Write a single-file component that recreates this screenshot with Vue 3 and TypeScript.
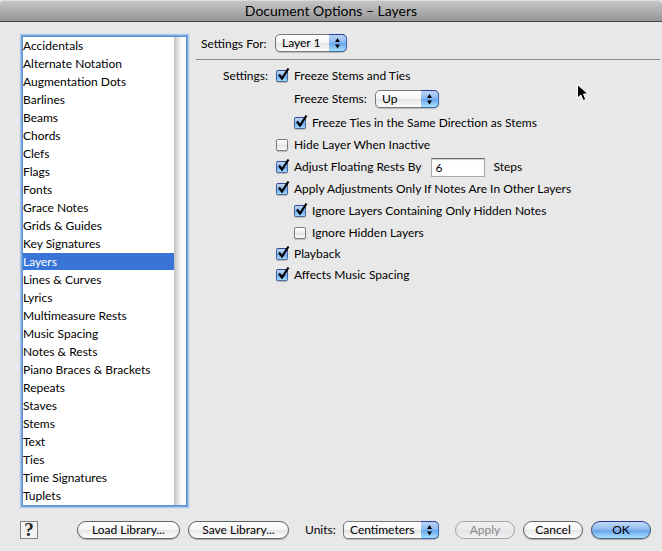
<script setup lang="ts">
import { reactive, ref } from 'vue'

interface Check {
  id: string
  label: string
  checked: boolean
  nested?: boolean
  kind?: 'stems' | 'steps'
}

const categories: string[] = [
  'Accidentals', 'Alternate Notation', 'Augmentation Dots', 'Barlines', 'Beams', 'Chords',
  'Clefs', 'Flags', 'Fonts', 'Grace Notes', 'Grids & Guides', 'Key Signatures', 'Layers',
  'Lines & Curves', 'Lyrics', 'Multimeasure Rests', 'Music Spacing', 'Notes & Rests',
  'Piano Braces & Brackets', 'Repeats', 'Staves', 'Stems', 'Text', 'Ties',
  'Time Signatures', 'Tuplets',
]
const current = ref('Layers')

const layer = ref('Layer 1')
const stems = ref('Up')
const steps = ref('6')
const units = ref('Centimeters')

const checks = reactive<Check[]>([
  { id: 'freeze', label: 'Freeze Stems and Ties', checked: true, kind: 'stems' },
  { id: 'ties', label: 'Freeze Ties in the Same Direction as Stems', checked: true, nested: true },
  { id: 'hide', label: 'Hide Layer When Inactive', checked: false },
  { id: 'rests', label: 'Adjust Floating Rests By', checked: true, kind: 'steps' },
  { id: 'apply', label: 'Apply Adjustments Only If Notes Are In Other Layers', checked: true },
  { id: 'ignore-notes', label: 'Ignore Layers Containing Only Hidden Notes', checked: true, nested: true },
  { id: 'ignore-layers', label: 'Ignore Hidden Layers', checked: false, nested: true },
  { id: 'playback', label: 'Playback', checked: true },
  { id: 'spacing', label: 'Affects Music Spacing', checked: true },
])
</script>

<template>
  <div class="window">
    <header class="titlebar"><h1>Document Options – Layers</h1></header>

    <div class="body">
      <nav class="categories" aria-label="Categories">
        <ul>
          <li v-for="name in categories" :key="name">
            <button
              type="button"
              :class="{ selected: name === current }"
              :aria-current="name === current"
              @click="current = name"
            >{{ name }}</button>
          </li>
        </ul>
        <div class="track"></div>
      </nav>

      <main>
        <div class="target">
          <label for="layer">Settings For:</label>
          <span class="popup layer">
            <select id="layer" v-model="layer">
              <option>Layer 1</option>
              <option>Layer 2</option>
              <option>Layer 3</option>
              <option>Layer 4</option>
            </select>
            <svg viewBox="0 0 17 16" aria-hidden="true"><path d="M6 7 8.5 3 11 7zM6 9.5 8.5 13.5 11 9.5z" /></svg>
          </span>
        </div>

        <div class="settings">
          <span class="heading">Settings:</span>
          <div class="rows">
            <template v-for="item in checks" :key="item.id">
              <div class="row" :class="[item.id, { nested: item.nested }]">
                <label class="check">
                  <span class="box">
                    <input v-model="item.checked" type="checkbox" />
                    <svg v-if="item.checked" viewBox="0 0 14 15" aria-hidden="true">
                      <path d="M3 7.5 6 11.5 12.5 1.5" />
                    </svg>
                  </span>
                  {{ item.label }}
                </label>
                <template v-if="item.kind === 'steps'">
                  <input id="steps" v-model="steps" class="field" type="text" />
                  <label for="steps" class="unit">Steps</label>
                </template>
              </div>
              <div v-if="item.kind === 'stems'" class="row sub">
                <label for="stems">Freeze Stems:</label>
                <span class="popup stems">
                  <select id="stems" v-model="stems">
                    <option>Up</option>
                    <option>Down</option>
                  </select>
                  <svg viewBox="0 0 17 16" aria-hidden="true"><path d="M6 7 8.5 3 11 7zM6 9.5 8.5 13.5 11 9.5z" /></svg>
                </span>
              </div>
            </template>
          </div>
        </div>
      </main>
    </div>

    <footer>
      <button type="button" class="help" aria-label="Help">?</button>
      <div class="library">
        <button type="button" class="pill load">Load Library...</button>
        <button type="button" class="pill save">Save Library...</button>
      </div>
      <div class="units">
        <label for="units">Units:</label>
        <span class="popup measure">
          <select id="units" v-model="units">
            <option>Centimeters</option>
            <option>Inches</option>
            <option>Points</option>
          </select>
          <svg viewBox="0 0 17 16" aria-hidden="true"><path d="M6 7 8.5 3 11 7zM6 9.5 8.5 13.5 11 9.5z" /></svg>
        </span>
      </div>
      <div class="actions">
        <button type="button" class="pill" disabled>Apply</button>
        <button type="button" class="pill">Cancel</button>
        <button type="button" class="pill primary">OK</button>
      </div>
    </footer>

    <svg class="pointer" viewBox="0 0 14 20" aria-hidden="true">
      <path d="M1.5 1.5V15L4.8 12 7.2 17.5 9.8 16.4 7.5 11H12z" />
    </svg>
  </div>
</template>

<style>
body {
  background: #e8e8e8;
}
</style>

<style scoped>
.window {
  position: relative;
  min-height: 100vh;
  box-sizing: border-box;
  display: flex;
  flex-direction: column;
  background: #e8e8e8;
  color: #000;
  font-family: Lato, "Open Sans", sans-serif;
  font-size: 12px;
  line-height: 16px;
}

button,
input,
select {
  margin: 0;
  font: inherit;
  color: inherit;
  box-sizing: border-box;
}

.titlebar {
  height: 22px;
  box-sizing: border-box;
  border-top: 1px solid #d8dcda;
  border-bottom: 1px solid #484848;
  border-radius: 4px 4px 0 0;
  background: linear-gradient(#c6c6c6, #969696);
}

h1 {
  margin: 0;
  font-size: 14px;
  font-weight: 400;
  line-height: 20px;
  text-align: center;
}

.body {
  display: flex;
  gap: 10px;
  padding: 15px 2px 0 23px;
}

.categories {
  flex: none;
  display: flex;
  width: 163px;
  background: #fff;
  box-shadow: 0 0 0 1px #5b8fd0, 0 0 0 2px #79a7e0, 0 0 1px 3px #a9c5e8;
}

ul {
  flex: 1;
  margin: 0;
  padding: 0;
  list-style: none;
}

li {
  height: 18px;
}

li button {
  display: block;
  width: 100%;
  height: 17px;
  padding: 0;
  border: 0;
  background: none;
  line-height: 18px;
  text-align: left;
}

li .selected {
  background: #3875d7;
  color: #fff;
}

.track {
  width: 12px;
  background: linear-gradient(90deg, #bdbdbd, #e2e2e2 30%, #fbfbfb 65%, #fff);
}

main {
  flex: 1;
  min-width: 0;
}

.target {
  display: flex;
  align-items: flex-start;
  gap: 7px;
  height: 22px;
  padding-left: 5px;
  border-bottom: 1px solid #8c8c8c;
}

.target label {
  width: 67px;
  line-height: 13px;
}

.target .popup {
  margin-top: -3px;
}

.popup {
  position: relative;
  display: inline-flex;
  height: 18px;
}

.popup select {
  width: 100%;
  height: 18px;
  padding: 0 22px 0 6px;
  appearance: none;
  border: 1px solid #777;
  border-radius: 5px;
  background: linear-gradient(#fff, #f4f4f4 48%, #e4e4e4 52%, #fdfdfd);
  box-shadow: 0 1px 1px #0003;
  line-height: 16px;
}

.popup svg {
  position: absolute;
  top: 0;
  right: 0;
  width: 18px;
  height: 18px;
  box-sizing: border-box;
  border: 1px solid #3c66ad;
  border-top-color: #2b3f9c;
  border-left: 0;
  border-radius: 0 5px 5px 0;
  background: linear-gradient(#b9d3f5, #8fbaf0 45%, #69a6ec 52%, #a6e0ff);
  pointer-events: none;
}

.layer {
  width: 72px;
}

.stems {
  width: 64px;
}

.measure {
  width: 96px;
}

.settings {
  display: flex;
  gap: 8px;
  padding-top: 5px;
}

.heading {
  width: 72px;
  text-align: right;
  line-height: 22px;
}

.row {
  display: flex;
  align-items: center;
  height: 22px;
}

.nested {
  padding-left: 18px;
}

.sub {
  height: 24px;
  gap: 6px;
  margin-bottom: 1px;
  padding-left: 18px;
}

.sub label {
  width: 75px;
}

.playback {
  height: 20px;
}

.check {
  display: flex;
  align-items: center;
  gap: 5px;
}

.box {
  position: relative;
  width: 13px;
  height: 13px;
}

.box input {
  display: block;
  width: 12px;
  height: 12px;
  appearance: none;
  border: 1px solid #7d7d7d;
  border-radius: 2px;
  background: linear-gradient(#fff, #ececec 50%, #e2e2e2 55%, #fafafa);
  box-shadow: 0 1px 1px #0003;
}

.box input:checked {
  border-color: #2e458f #42649f #4a6b96;
  background: linear-gradient(#c2daf7, #85b4ee 50%, #6aa8ee 55%, #a6deff);
}

.box svg {
  position: absolute;
  top: -3px;
  left: 0;
  width: 14px;
  height: 15px;
  fill: none;
  stroke: #000;
  stroke-width: 2.2;
  pointer-events: none;
}

.field {
  width: 54px;
  height: 19px;
  margin-left: 10px;
  padding: 0 3px;
  border: 1px solid #a8a8a8;
  border-top-color: #6c6c6c;
  background: #fff;
  box-shadow: inset 0 1px 1px #0003;
}

.unit {
  margin-left: 8px;
}

footer {
  display: flex;
  align-items: center;
  padding: 16px 11px 10px 20px;
}

.help {
  width: 18px;
  height: 18px;
  padding: 0;
  border: 1px solid #868686;
  background: #f3f3f3;
  color: #222;
  font-family: "Liberation Serif", serif;
  font-size: 19px;
  font-weight: 700;
  line-height: 16px;
}

.library {
  display: flex;
  gap: 8px;
  margin-left: 39px;
}

.units {
  display: flex;
  align-items: center;
  gap: 7px;
  margin-left: 16px;
}

.units label {
  width: 31px;
}

.actions {
  display: flex;
  gap: 8px;
  margin-left: auto;
}

.pill {
  width: 60px;
  height: 18px;
  padding: 0;
  border: 1px solid #626262;
  border-radius: 9px;
  background: linear-gradient(#fff, #f6f6f6 48%, #e6e6e6 52%, #fff);
  box-shadow: 0 1px 1px #0004;
  line-height: 16px;
}

.load {
  width: 103px;
}

.save {
  width: 101px;
}

.pill:disabled {
  border-color: #a5a5a5;
  background: linear-gradient(#f2f2f2, #e9e9e9 50%, #e4e4e4 54%, #f0f0f0);
  box-shadow: none;
  color: #8a8a8a;
}

.primary {
  border-color: #26308f #40597f #4a5f7c;
  background: linear-gradient(#c3dbf8, #8db9ef 46%, #69a5e9 54%, #a8e0ff);
}

.pointer {
  position: absolute;
  top: 83px;
  left: 576px;
  width: 14px;
  height: 20px;
  fill: #000;
  stroke: #fff;
  stroke-width: 1;
}
</style>
